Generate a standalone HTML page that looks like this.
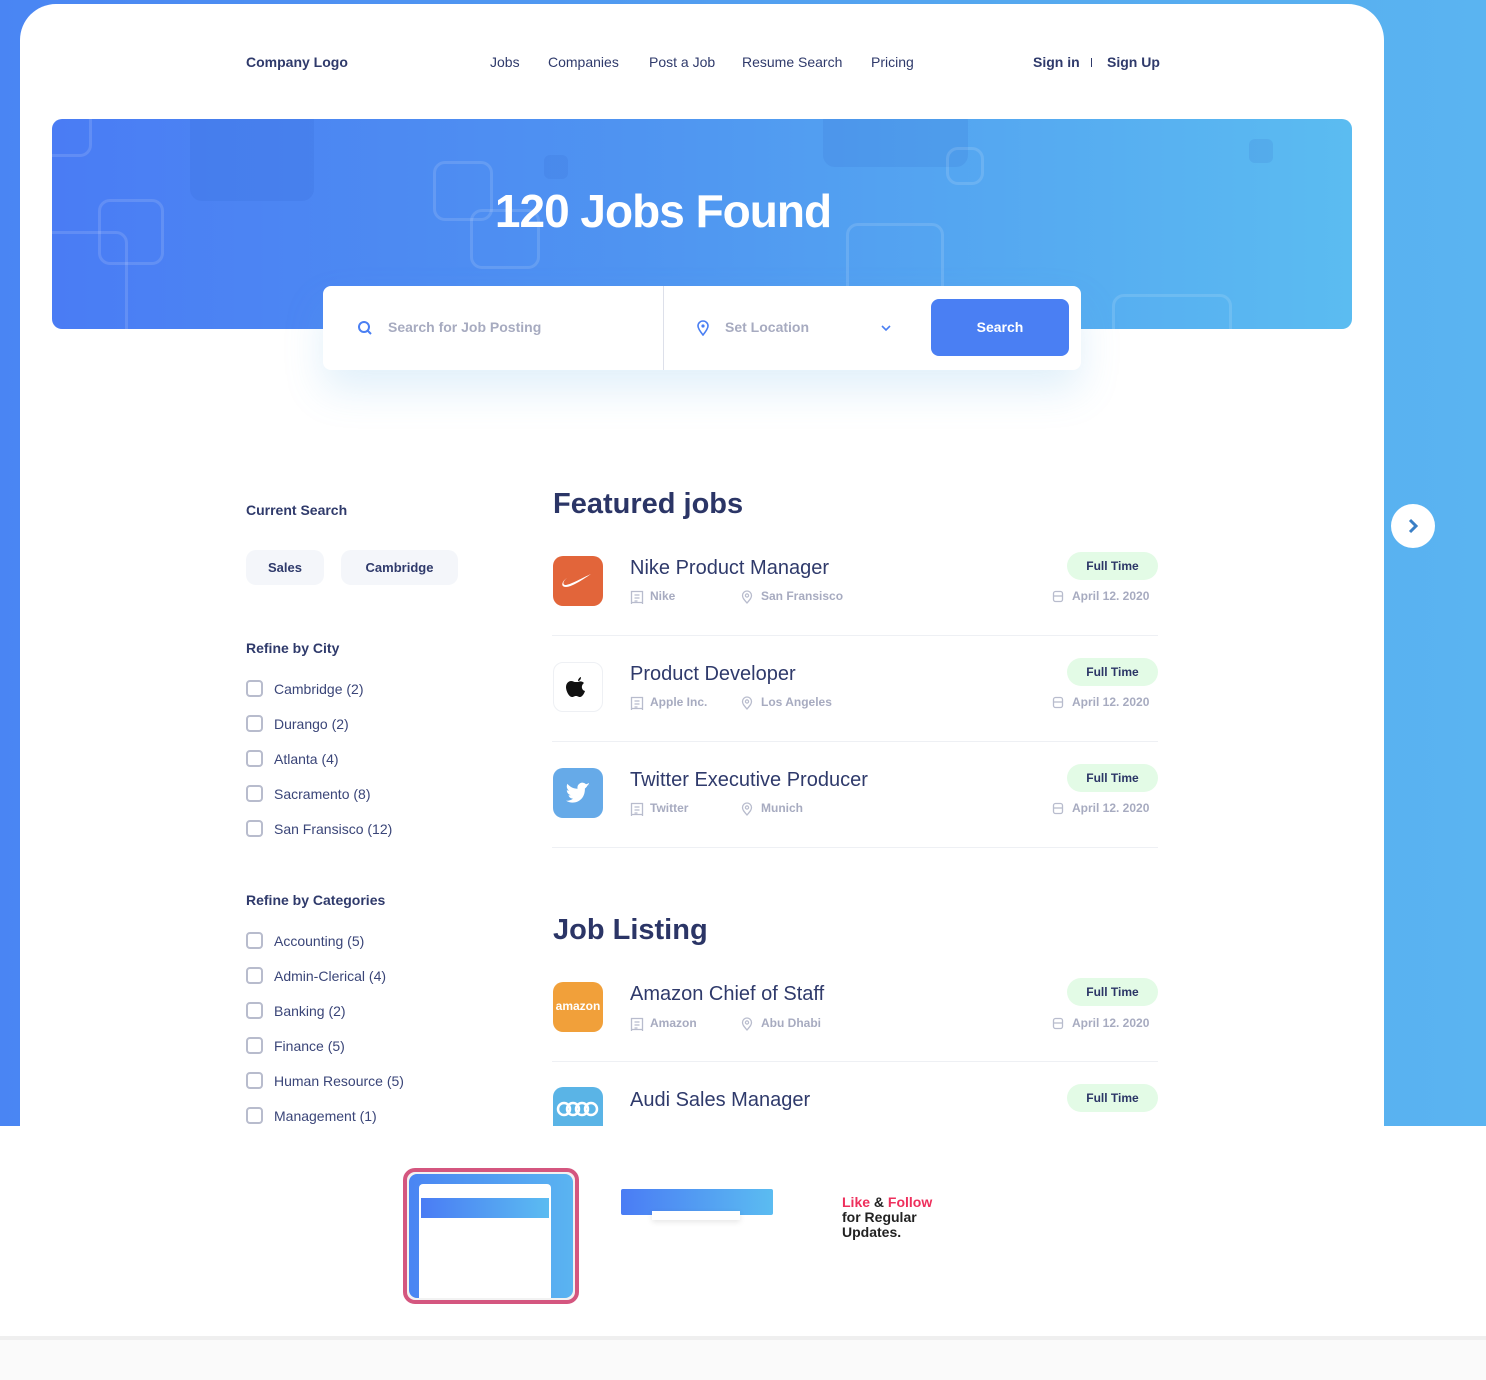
<!DOCTYPE html>
<html><head><meta charset="utf-8"><style>
*{margin:0;padding:0;box-sizing:border-box}
body{width:1486px;height:1380px;position:relative;overflow:hidden;background:#fafafa;font-family:"Liberation Sans",sans-serif;color:#2f3a6b}
.abs{position:absolute}
#top{left:0;top:0;width:1486px;height:1126px;background:linear-gradient(90deg,#4a85f3,#55a9ef 70%,#5ab4f1);overflow:hidden}
#card{left:20px;top:4px;width:1364px;height:1200px;background:#fff;border-radius:36px;overflow:hidden}
.nav{font-size:14px;color:#2f3a6b;top:50px}
.hero{left:32px;top:115px;width:1300px;height:210px;border-radius:10px;background:linear-gradient(90deg,#4a7cf4,#4f94f1 45%,#5bbcf1);overflow:hidden}
.sq{position:absolute;border:3px solid rgba(255,255,255,.13);border-radius:12px}
.fill{position:absolute;background:rgba(40,90,200,.12);border-radius:12px}
h1{position:absolute;left:0;width:1286px;text-align:center;top:180px;color:#fff;font-size:46px;font-weight:bold;letter-spacing:-1px}
.sbox{left:303px;top:282px;width:758px;height:84px;background:#fff;border-radius:8px;box-shadow:0 20px 40px rgba(90,170,230,.18)}
.ph{font-size:14px;color:#a7abc0;font-weight:bold;top:33px}
.btn{left:608px;top:13px;width:138px;height:57px;background:#4a7ff3;border-radius:8px;color:#fff;font-weight:bold;font-size:14px;text-align:center;line-height:57px}
.h3{font-size:14px;font-weight:bold}
.chip{height:35px;background:#f4f6fa;border-radius:10px;font-size:13px;font-weight:bold;text-align:center;line-height:35px}
.cb{font-size:14px;color:#3a4578}
.cb i{position:absolute;left:-28px;top:-1px;width:17px;height:17px;border:2px solid #b8bccd;border-radius:4px}
.h2{font-size:29px;font-weight:bold;color:#2b3566}
.logo{width:50px;height:50px;border-radius:10px;overflow:hidden}
.title{font-size:20px;color:#2f3a6b}
.meta{font-size:12px;color:#a7abc0;font-weight:bold}
.meta svg{position:absolute;left:-20px;top:1px}
.badge{width:91px;height:28px;border-radius:14px;background:#e3fbe6;color:#2b3566;font-size:12px;font-weight:bold;text-align:center;line-height:28px}
.hr{height:1px;background:#eef0f4;width:606px;left:532px}
</style></head><body>
<svg width="0" height="0" style="position:absolute"><defs>
<g id="bld"><path d="M1.5 1.5h11v11h-11zM1.5 12.5v1.5M12.5 12.5v1.5M4.5 5h5M4.5 8h5M4.5 11h3" fill="none" stroke="#b8bccd" stroke-width="1.3"/></g>
<g id="pin"><path d="M6 13C2.5 9 1.5 7.5 1.5 5.5a4.5 4.5 0 019 0c0 2-1 3.5-4.5 7.5z" fill="none" stroke="#b8bccd" stroke-width="1.3"/><circle cx="6" cy="5.5" r="1.6" fill="none" stroke="#b8bccd" stroke-width="1.2"/></g>
<g id="cal"><rect x="1.5" y="1.5" width="9" height="10" rx="2" fill="none" stroke="#b8bccd" stroke-width="1.3"/><path d="M1.5 6h9" stroke="#b8bccd" stroke-width="1.3"/></g>
</defs></svg>
<div id="top" class="abs">
<div id="card" class="abs">
 <div class="abs nav" style="left:226px;font-weight:bold">Company Logo</div>
 <div class="abs nav" style="left:470px">Jobs</div>
 <div class="abs nav" style="left:528px">Companies</div>
 <div class="abs nav" style="left:629px">Post a Job</div>
 <div class="abs nav" style="left:722px">Resume Search</div>
 <div class="abs nav" style="left:851px">Pricing</div>
 <div class="abs nav" style="left:1013px;font-weight:bold">Sign in</div>
 <div class="abs" style="left:1071px;top:54px;width:1px;height:9px;background:#2f3a6b"></div>
 <div class="abs nav" style="left:1087px;font-weight:bold">Sign Up</div>
 <div class="abs hero">
  <div class="fill" style="left:138px;top:-10px;width:124px;height:92px"></div>
  <div class="fill" style="left:771px;top:-10px;width:145px;height:58px"></div>
  <div class="fill" style="left:492px;top:36px;width:24px;height:24px;border-radius:6px"></div>
  <div class="fill" style="left:1197px;top:20px;width:24px;height:24px;border-radius:6px"></div>
  <div class="sq" style="left:-20px;top:-10px;width:60px;height:48px"></div>
  <div class="sq" style="left:46px;top:80px;width:66px;height:66px"></div>
  <div class="sq" style="left:-20px;top:112px;width:96px;height:120px"></div>
  <div class="sq" style="left:381px;top:42px;width:60px;height:60px"></div>
  <div class="sq" style="left:418px;top:90px;width:70px;height:60px"></div>
  <div class="sq" style="left:794px;top:104px;width:98px;height:120px"></div>
  <div class="sq" style="left:894px;top:28px;width:38px;height:38px"></div>
  <div class="sq" style="left:1060px;top:175px;width:120px;height:80px"></div>
 </div>
 <h1>120 Jobs Found</h1>
 <div class="abs sbox">
  <svg class="abs" style="left:34px;top:34px" width="16" height="16" viewBox="0 0 16 16"><circle cx="7" cy="7" r="5" fill="none" stroke="#4a7ff3" stroke-width="2"/><path d="M11 11l3 3" stroke="#4a7ff3" stroke-width="2"/></svg>
  <div class="abs ph" style="left:65px">Search for Job Posting</div>
  <div class="abs" style="left:340px;top:0;width:1px;height:84px;background:#dde0ea"></div>
  <svg class="abs" style="left:374px;top:34px" width="12" height="16" viewBox="0 0 12 16"><path d="M6 15C2 10 1 8 1 6a5 5 0 0110 0c0 2-1 4-5 9z" fill="none" stroke="#4a7ff3" stroke-width="1.6"/><circle cx="6" cy="6" r="1.6" fill="#4a7ff3"/></svg>
  <div class="abs ph" style="left:402px">Set Location</div>
  <svg class="abs" style="left:558px;top:38px" width="10" height="8" viewBox="0 0 10 8"><path d="M1 2l4 4 4-4" fill="none" stroke="#4a7ff3" stroke-width="1.6"/></svg>
  <div class="abs btn">Search</div>
 </div>

 <div class="abs h3" style="left:226px;top:498px">Current Search</div>
 <div class="abs chip" style="left:226px;top:546px;width:78px">Sales</div>
 <div class="abs chip" style="left:321px;top:546px;width:117px">Cambridge</div>
 <div class="abs h3" style="left:226px;top:636px">Refine by City</div>
 <div class="abs cb" style="left:254px;top:677px"><i></i>Cambridge (2)</div>
 <div class="abs cb" style="left:254px;top:712px"><i></i>Durango (2)</div>
 <div class="abs cb" style="left:254px;top:747px"><i></i>Atlanta (4)</div>
 <div class="abs cb" style="left:254px;top:782px"><i></i>Sacramento (8)</div>
 <div class="abs cb" style="left:254px;top:817px"><i></i>San Fransisco (12)</div>
 <div class="abs h3" style="left:226px;top:888px">Refine by Categories</div>
 <div class="abs cb" style="left:254px;top:929px"><i></i>Accounting (5)</div>
 <div class="abs cb" style="left:254px;top:964px"><i></i>Admin-Clerical (4)</div>
 <div class="abs cb" style="left:254px;top:999px"><i></i>Banking (2)</div>
 <div class="abs cb" style="left:254px;top:1034px"><i></i>Finance (5)</div>
 <div class="abs cb" style="left:254px;top:1069px"><i></i>Human Resource (5)</div>
 <div class="abs cb" style="left:254px;top:1104px"><i></i>Management (1)</div>

 <div class="abs h2" style="left:533px;top:484px">Featured jobs</div>
 <div class="abs h2" style="left:533px;top:910px">Job Listing</div>

 <div class="abs logo" style="left:533px;top:552px;background:#e2653a"><svg width="50" height="50" viewBox="0 0 50 50"><path d="M38 18C29 22 19 28 13 29c-4 0-3-4 1-7-5 3-7 9-1 9 5 0 15-6 25-13z" fill="#fff"/></svg></div>
 <div class="abs title" style="left:610px;top:553px">Nike Product Manager</div>
 <div class="abs meta" style="left:630px;top:585px"><svg width="14" height="15"><use href="#bld"/></svg>Nike</div><div class="abs meta" style="left:741px;top:585px"><svg width="12" height="14"><use href="#pin"/></svg>San Fransisco</div>
 <div class="abs badge" style="left:1047px;top:548px">Full Time</div>
 <div class="abs meta" style="left:1052px;top:585px"><svg width="12" height="13"><use href="#cal"/></svg>April 12. 2020</div>
 <div class="abs hr" style="top:631px"></div>

 <div class="abs logo" style="left:533px;top:658px;border:1px solid #eef0f4;background:#fff"><svg width="48" height="48" viewBox="0 0 48 48"><path d="M24 19c2-1 4-1 6 1-3 2-3 7 1 8-1 3-3 6-5 6-2 0-2-1-4-1s-2 1-4 1c-3 0-6-6-6-10 0-4 3-6 5-6 2 0 3 1 4 1zm0-1c0-2 2-4 3-4 0 2-1 4-3 4z" fill="#111"/></svg></div>
 <div class="abs title" style="left:610px;top:659px">Product Developer</div>
 <div class="abs meta" style="left:630px;top:691px"><svg width="14" height="15"><use href="#bld"/></svg>Apple Inc.</div><div class="abs meta" style="left:741px;top:691px"><svg width="12" height="14"><use href="#pin"/></svg>Los Angeles</div>
 <div class="abs badge" style="left:1047px;top:654px">Full Time</div>
 <div class="abs meta" style="left:1052px;top:691px"><svg width="12" height="13"><use href="#cal"/></svg>April 12. 2020</div>
 <div class="abs hr" style="top:737px"></div>

 <div class="abs logo" style="left:533px;top:764px;background:#66aae8"><svg width="50" height="50" viewBox="0 0 50 50"><path d="M37 17c-1 .5-2 .7-3 .8 1-.6 2-1.6 2-2.8-1 .6-2 1-3 1.2a5 5 0 00-8.5 4.5c-4 0-8-2-10-5-1.5 2.5-.5 5.5 1.5 7-1 0-1.5-.3-2.2-.6 0 2.5 1.7 4.5 4 5-1 .3-1.6.3-2.3.1.6 2 2.5 3.4 4.6 3.4-2 1.6-4.8 2.4-7.2 2 8 5 19 .3 19-11.5v-.6c1-.7 1.7-1.5 2.300-2.5z" fill="#fff"/></svg></div>
 <div class="abs title" style="left:610px;top:765px">Twitter Executive Producer</div>
 <div class="abs meta" style="left:630px;top:797px"><svg width="14" height="15"><use href="#bld"/></svg>Twitter</div><div class="abs meta" style="left:741px;top:797px"><svg width="12" height="14"><use href="#pin"/></svg>Munich</div>
 <div class="abs badge" style="left:1047px;top:760px">Full Time</div>
 <div class="abs meta" style="left:1052px;top:797px"><svg width="12" height="13"><use href="#cal"/></svg>April 12. 2020</div>
 <div class="abs hr" style="top:843px"></div>

 <div class="abs logo" style="left:533px;top:978px;background:#f1a03a;color:#fff;font-size:12px;font-weight:bold;text-align:center;line-height:48px">amazon</div>
 <div class="abs title" style="left:610px;top:979px">Amazon Chief of Staff</div>
 <div class="abs meta" style="left:630px;top:1012px"><svg width="14" height="15"><use href="#bld"/></svg>Amazon</div><div class="abs meta" style="left:741px;top:1012px"><svg width="12" height="14"><use href="#pin"/></svg>Abu Dhabi</div>
 <div class="abs badge" style="left:1047px;top:974px">Full Time</div>
 <div class="abs meta" style="left:1052px;top:1012px"><svg width="12" height="13"><use href="#cal"/></svg>April 12. 2020</div>
 <div class="abs hr" style="top:1057px"></div>

 <div class="abs logo" style="left:533px;top:1083px;background:#5ab4e6"><svg width="50" height="50" viewBox="0 0 50 50"><g fill="none" stroke="#fff" stroke-width="2.5"><circle cx="11" cy="22" r="6"/><circle cx="20" cy="22" r="6"/><circle cx="29" cy="22" r="6"/><circle cx="38" cy="22" r="6"/></g></svg></div>
 <div class="abs title" style="left:610px;top:1085px">Audi Sales Manager</div>
 <div class="abs badge" style="left:1047px;top:1080px">Full Time</div>
</div>
<div class="abs" style="left:1391px;top:504px;width:44px;height:44px;border-radius:50%;background:#fff"><svg width="44" height="44" viewBox="0 0 44 44"><path d="M19 16l6 6-6 6" fill="none" stroke="#3a7fc6" stroke-width="3"/></svg></div>
</div>

<div class="abs" style="left:0;top:1126px;width:1486px;height:210px;background:#fff"></div>
<div class="abs" style="left:0;top:1336px;width:1486px;height:4px;background:#efefef"></div>
<div class="abs" style="left:403px;top:1168px;width:176px;height:136px;border:4px solid #d4567f;border-radius:12px;background:#f2f2f2;padding:2px">
 <div style="width:100%;height:100%;border-radius:8px;background:linear-gradient(90deg,#4a85f3,#5ab4f1);position:relative;overflow:hidden">
  <div class="abs" style="left:10px;top:10px;width:132px;height:130px;background:#fff;border-radius:4px"></div>
  <div class="abs" style="left:12px;top:24px;width:128px;height:20px;background:linear-gradient(90deg,#4a7cf4,#5bbcf1)"></div>
 </div>
</div>
<div class="abs" style="left:621px;top:1189px;width:152px;height:26px;background:linear-gradient(90deg,#4a7cf4,#5bbcf1);border-radius:2px"></div>
<div class="abs" style="left:652px;top:1211px;width:88px;height:9px;background:#fff;box-shadow:0 2px 6px rgba(0,0,0,.1)"></div>
<div class="abs" style="left:842px;top:1195px;font-size:14px;font-weight:bold;line-height:15px;color:#222"><span style="color:#ee2f5c">Like</span> &amp; <span style="color:#ee2f5c">Follow</span><br>for Regular<br>Updates.</div>
</body></html>
